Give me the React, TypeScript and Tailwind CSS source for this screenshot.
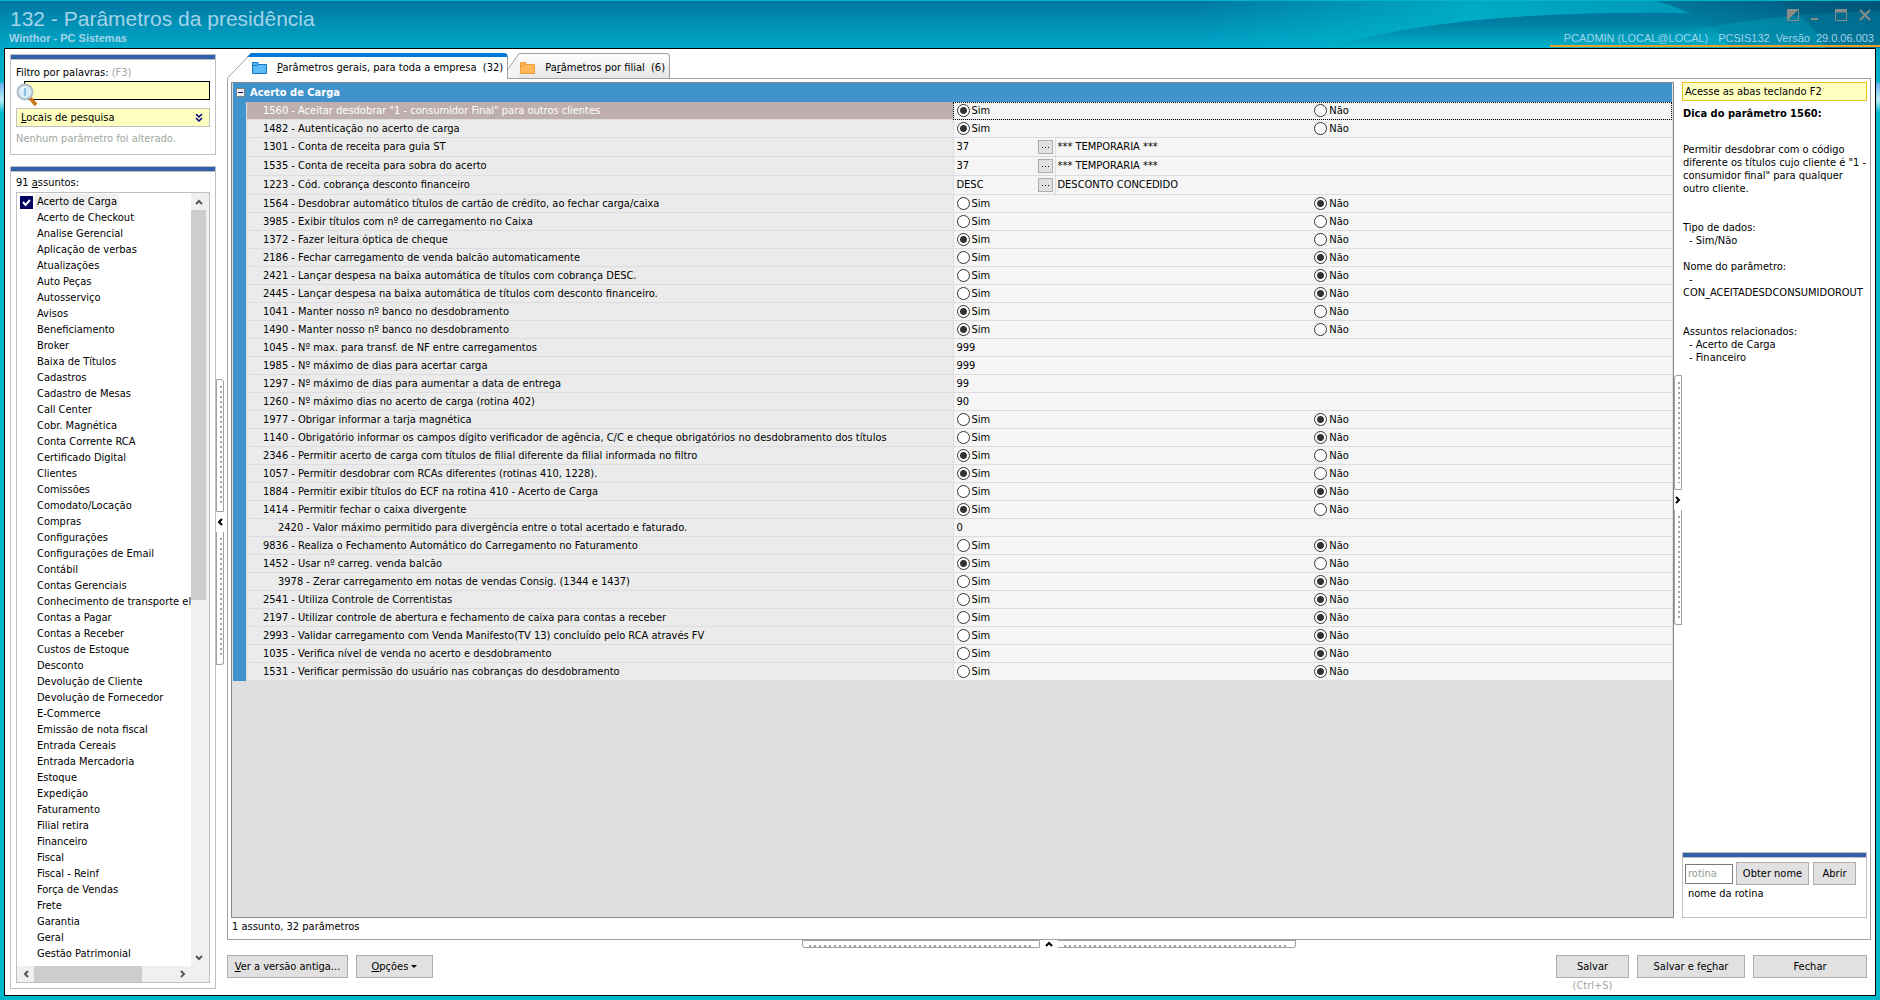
import React from 'react';

type Param = {
  code: string;
  name: string;
  sub?: boolean;
  yes?: boolean;
  value?: string;
  lookup?: string;
};

const subjects = [
  'Acerto de Carga', 'Acerto de Checkout', 'Analise Gerencial', 'Aplicação de verbas', 'Atualizações',
  'Auto Peças', 'Autosserviço', 'Avisos', 'Beneficiamento', 'Broker', 'Baixa de Títulos', 'Cadastros',
  'Cadastro de Mesas', 'Call Center', 'Cobr. Magnética', 'Conta Corrente RCA', 'Certificado Digital',
  'Clientes', 'Comissões', 'Comodato/Locação', 'Compras', 'Configurações', 'Configurações de Email',
  'Contábil', 'Contas Gerenciais', 'Conhecimento de transporte ele', 'Contas a Pagar',
  'Contas a Receber', 'Custos de Estoque', 'Desconto', 'Devolução de Cliente', 'Devolução de Fornecedor',
  'E-Commerce', 'Emissão de nota fiscal', 'Entrada Cereais', 'Entrada Mercadoria', 'Estoque', 'Expedição',
  'Faturamento', 'Filial retira', 'Financeiro', 'Fiscal', 'Fiscal - Reinf', 'Força de Vendas', 'Frete',
  'Garantia', 'Geral', 'Gestão Patrimonial',
];

const params: Param[] = [
  { code: '1560', name: 'Aceitar desdobrar "1 - consumidor Final" para outros clientes', yes: true },
  { code: '1482', name: 'Autenticação no acerto de carga', yes: true },
  { code: '1301', name: 'Conta de receita para guia ST', value: '37', lookup: '*** TEMPORARIA ***' },
  { code: '1535', name: 'Conta de receita para sobra do acerto', value: '37', lookup: '*** TEMPORARIA ***' },
  { code: '1223', name: 'Cód. cobrança desconto financeiro', value: 'DESC', lookup: 'DESCONTO CONCEDIDO' },
  { code: '1564', name: 'Desdobrar automático títulos de cartão de crédito, ao fechar carga/caixa', yes: false },
  { code: '3985', name: 'Exibir títulos com nº de carregamento no Caixa' },
  { code: '1372', name: 'Fazer leitura óptica de cheque', yes: true },
  { code: '2186', name: 'Fechar carregamento de venda balcão automaticamente', yes: false },
  { code: '2421', name: 'Lançar despesa na baixa automática de títulos com cobrança DESC.', yes: false },
  { code: '2445', name: 'Lançar despesa na baixa automática de títulos com desconto financeiro.', yes: false },
  { code: '1041', name: 'Manter nosso nº banco no desdobramento', yes: true },
  { code: '1490', name: 'Manter nosso nº banco no desdobramento', yes: true },
  { code: '1045', name: 'Nº max. para transf. de NF entre carregamentos', value: '999' },
  { code: '1985', name: 'Nº máximo de dias para acertar carga', value: '999' },
  { code: '1297', name: 'Nº máximo de dias para aumentar a data de entrega', value: '99' },
  { code: '1260', name: 'Nº máximo dias no acerto de carga (rotina 402)', value: '90' },
  { code: '1977', name: 'Obrigar informar a tarja magnética', yes: false },
  { code: '1140', name: 'Obrigatório informar os campos dígito verificador de agência, C/C e cheque obrigatórios no desdobramento dos títulos', yes: false },
  { code: '2346', name: 'Permitir acerto de carga com títulos de filial diferente da filial informada no filtro', yes: true },
  { code: '1057', name: 'Permitir desdobrar com RCAs diferentes (rotinas 410, 1228).', yes: true },
  { code: '1884', name: 'Permitir exibir títulos do ECF na rotina 410 - Acerto de Carga', yes: false },
  { code: '1414', name: 'Permitir fechar o caixa divergente', yes: true },
  { code: '2420', name: 'Valor máximo permitido para divergência entre o total acertado e faturado.', sub: true, value: '0' },
  { code: '9836', name: 'Realiza o Fechamento Automático do Carregamento no Faturamento', yes: false },
  { code: '1452', name: 'Usar nº carreg. venda balcão', yes: true },
  { code: '3978', name: 'Zerar carregamento em notas de vendas Consig. (1344 e 1437)', sub: true, yes: false },
  { code: '2541', name: 'Utiliza Controle de Correntistas', yes: false },
  { code: '2197', name: 'Utilizar controle de abertura e fechamento de caixa para contas a receber', yes: false },
  { code: '2993', name: 'Validar carregamento com Venda Manifesto(TV 13) concluído pelo RCA através FV', yes: false },
  { code: '1035', name: 'Verifica nível de venda no acerto e desdobramento', yes: false },
  { code: '1531', name: 'Verificar permissão do usuário nas cobranças do desdobramento', yes: false },
];

function Chevron({ dir }: { dir: 'up' | 'down' | 'left' | 'right' }) {
  const d = {
    up: 'M1 6 L4 3 L7 6',
    down: 'M1 2 L4 5 L7 2',
    left: 'M6 1 L3 4 L6 7',
    right: 'M2 1 L5 4 L2 7',
  }[dir];
  return (
    <svg width="8" height="8" viewBox="0 0 8 8" fill="none" stroke="currentColor" strokeWidth="2">
      <path d={d} />
    </svg>
  );
}

function Folder({ fill, stroke }: { fill: string; stroke: string }) {
  return (
    <svg width="15" height="12" viewBox="0 0 15 12" fill={fill} stroke={stroke} className="shrink-0">
      <path d="M.5 11.500V.5H6V2.500H14.500V11.500Z" />
      <path d="M.5 3.500H5L6 2.500" fill="none" />
    </svg>
  );
}

/* Collapsible splitter grip, vertical */
function Grip({ dir }: { dir: 'left' | 'right' }) {
  const dots = 'absolute inset-y-1.5 right-px w-0.5 bg-[repeating-linear-gradient(#a0a0a0_0_2px,transparent_2px_5px)]';
  const size = dir === 'left' ? 'h-[133px]' : 'h-[115px]';
  const top = dir === 'left' ? 'rounded-tr-[3px]' : 'rounded-tl-[3px]';
  const bottom = dir === 'left' ? 'rounded-br-[3px]' : 'rounded-bl-[3px]';
  return (
    <button aria-label="Recolher painel" className="flex w-2 shrink-0 flex-col items-center self-center">
      <span className={`relative block w-2 border border-[#a0a0a0] ${size} ${top}`}><span className={dots} /></span>
      <span className="flex h-5 items-center"><Chevron dir={dir} /></span>
      <span className={`relative block w-2 border border-t-0 border-[#a0a0a0] ${size} ${bottom}`}><span className={dots} /></span>
    </button>
  );
}

function Panel({ className, children }: { className?: string; children: React.ReactNode }) {
  return (
    <section className={`border border-[#c0c0c0] ${className ?? ''}`}>
      <div className="h-[5px] border-b border-[#c0c0c0] bg-[#315faa]" />
      {children}
    </section>
  );
}

function Button({ className, children }: { className?: string; children: React.ReactNode }) {
  return (
    <button className={`h-[23px] border border-[#adadad] bg-[#e1e1e1] text-center ${className ?? ''}`}>{children}</button>
  );
}

function Radio({ name, label, checked }: { name: string; label: string; checked: boolean }) {
  return (
    <label className="flex flex-1 items-center gap-0.5">
      <input
        type="radio"
        name={name}
        defaultChecked={checked}
        className="size-[13px] appearance-none rounded-full border border-[#333] bg-white checked:bg-[radial-gradient(circle,#333_3px,#fff_4px)]"
      />
      {label}
    </label>
  );
}

function TitleBar() {
  return (
    <header className="relative flex h-12 justify-between border-t border-[#00b4cc] bg-linear-to-b from-[#0078a3] to-[#00a9c8] font-['Liberation_Sans',Arial,sans-serif] text-[#a3d3ea]">
      <svg className="absolute right-0 top-0" width="680" height="47" viewBox="0 0 680 47">
        <defs>
          <linearGradient id="sheen" x1="0" y1="0" x2="1" y2="0">
            <stop offset="0" stopColor="#00bcd2" stopOpacity="0" />
            <stop offset=".4" stopColor="#00bcd2" stopOpacity=".7" />
            <stop offset="1" stopColor="#00bcd2" stopOpacity=".2" />
          </linearGradient>
          <linearGradient id="wedge" x1="0" y1="0" x2="0" y2="1">
            <stop offset=".2" stopColor="#007aa0" />
            <stop offset="1" stopColor="#00b2ca" />
          </linearGradient>
          <linearGradient id="corner" x1="0" y1="1" x2="1" y2="0">
            <stop offset="0" stopColor="#0098b8" />
            <stop offset="1" stopColor="#005278" />
          </linearGradient>
        </defs>
        <path d="M0 0H680V47H0Z" fill="url(#sheen)" />
        <path d="M125 47C210 22 320 10 480 12L680 22V47Z" fill="url(#wedge)" />
        <path d="M455 0C495 10 520 28 530 47H680V0Z" fill="url(#corner)" />
        <path d="M430 47C500 22 590 12 680 10V47Z" fill="#00a8c4" opacity=".35" />
        <path d="M575 0C605 14 620 32 625 47H680V0Z" fill="#005478" opacity=".35" />
      </svg>
      <div className="relative pl-[9px] pt-1">
        <h1 className="pl-px text-[21px] leading-[27px]">132 - Parâmetros da presidência</h1>
        <p className="text-[11px] leading-[12px] font-bold">Winthor - PC Sistemas</p>
      </div>
      <div className="relative flex flex-col items-end">
        <div className="flex h-7 items-center gap-3 pr-[9px] text-[#8c8c86]">
          <button aria-label="Tema">
            <svg width="12" height="12" viewBox="0 0 12 12"><path d="M.5 .5H11.500V11.500H.5Z" fill="none" stroke="currentColor" /><path d="M0 0H12L0 12Z" fill="currentColor" /></svg>
          </button>
          <button aria-label="Minimizar">
            <svg width="8" height="12" viewBox="0 0 8 12"><path d="M0 10H7" stroke="currentColor" strokeWidth="2" /></svg>
          </button>
          <button aria-label="Maximizar" className="pl-1">
            <svg width="12" height="12" viewBox="0 0 12 12"><path d="M.5 .5H11.500V11.500H.5Z" fill="none" stroke="currentColor" /><path d="M0 2H12" stroke="currentColor" strokeWidth="3" /></svg>
          </button>
          <button aria-label="Fechar janela">
            <svg width="12" height="12" viewBox="0 0 12 12"><path d="M1 1L11 11M11 1L1 11" stroke="currentColor" strokeWidth="2" /></svg>
          </button>
        </div>
        <p className="flex h-[18px] w-[330px] items-end justify-end gap-1.5 border-b-2 border-[#f0a020] pr-1.5 text-[11px] whitespace-nowrap">
          <span className="pr-1">PCADMIN (LOCAL@LOCAL)</span>
          <span>PCSIS132</span>
          <span>Versão</span>
          <span>29.0.06.003</span>
        </p>
      </div>
    </header>
  );
}

function Filter() {
  return (
    <Panel className="h-[101px]">
      <div className="flex flex-col px-[5px] pt-[5px]">
        <label htmlFor="filtro" className="leading-[16px]">
          Filtro por palavras: <span className="text-[#a0a8a0]">(F3)</span>
        </label>
        <div className="relative pl-2">
          <input id="filtro" className="block h-[19px] w-full border border-black bg-[#ffffc0] px-4" />
          <svg className="absolute left-0 top-0.5" width="23" height="24" viewBox="0 0 23 24" fill="none">
            <path d="M14 15L20 22" stroke="#c8791c" strokeWidth="3.500" />
            <circle cx="9" cy="9" r="7.500" fill="#d4ecf7" stroke="#b4bcc4" strokeWidth="2" />
            <path d="M9 5V13" stroke="#8fbfe0" strokeWidth="2" />
            <path d="M5 8C6 5 8 4 10 4" stroke="#fff" strokeWidth="1.500" />
          </svg>
        </div>
        <button className="mt-2 flex h-[19px] items-center justify-between border border-[#c0c0c0] bg-[#ffffc0] pl-1 pr-1.5">
          <span><u>L</u>ocais de pesquisa</span>
          <svg width="8" height="8" viewBox="0 0 8 8" fill="none" stroke="#000080" strokeWidth="1.500">
            <path d="M1 0L4 3L7 0M1 4L4 7L7 4" />
          </svg>
        </button>
        <p className="mt-1 leading-[16px] text-[#a0a8a0]">Nenhum parâmetro foi alterado.</p>
      </div>
    </Panel>
  );
}

function SubjectList() {
  return (
    <Panel className="flex flex-1 flex-col">
      <div className="flex flex-1 flex-col px-[5px] pt-0.5 pb-[5px]">
        <p className="h-[18px] leading-[17px]">91 <u>a</u>ssuntos:</p>
        <div className="flex flex-1 flex-col border border-[#c0c0c0]">
          <div className="flex flex-1">
            <ul className="w-0 flex-1 overflow-hidden pt-px pl-[3px]">
              {subjects.map((s, i) => (
                <li key={s} className="h-4">
                  <label className="flex h-4 items-center gap-0.5 whitespace-nowrap">
                    <span className="relative size-[13px] shrink-0">
                      <input type="checkbox" defaultChecked={i === 0} className="peer block size-[13px] appearance-none checked:bg-[#000060]" />
                      <svg className="absolute inset-0 hidden peer-checked:block" width="13" height="13" viewBox="0 0 13 13" fill="none" stroke="#fff" strokeWidth="2">
                        <path d="M3 6L5.500 9L10 4" />
                      </svg>
                    </span>
                    <span className={i === 0 ? 'bg-[#f0f0f0] px-0.5 leading-[16px]' : 'pl-0.5 leading-[16px]'}>{s}</span>
                  </label>
                </li>
              ))}
            </ul>
            <div className="flex w-[18px] shrink-0 flex-col items-center bg-[#f0f0f0] pr-[3px] text-[#505a5a]">
              <span className="flex h-[17px] items-center"><Chevron dir="up" /></span>
              <span className="h-[390px] w-full bg-[#cdcdcd]" />
              <span className="mt-auto flex h-[17px] items-center"><Chevron dir="down" /></span>
            </div>
          </div>
          <div className="flex h-4 items-center bg-[#f0f0f0] text-[#505a5a]">
            <span className="flex w-[17px] justify-center"><Chevron dir="left" /></span>
            <span className="mr-auto h-full w-[108px] bg-[#cdcdcd]" />
            <span className="mr-[18px] flex w-[17px] justify-center"><Chevron dir="right" /></span>
          </div>
        </div>
      </div>
    </Panel>
  );
}

function Tabs() {
  return (
    <div role="tablist" className="relative -mb-px flex h-[26px]">
      <svg width="24" height="26" viewBox="0 0 24 26" className="shrink-0">
        <path d="M.5 26V25L24 .5V26" fill="#fff" stroke="#a0a0a0" />
        <path d="M20 4L24 0V4Z" fill="#0078d7" />
        <path d="M1 26H24V5" stroke="#fff" strokeWidth="2" fill="none" />
      </svg>
      <button role="tab" aria-selected="true" className="flex items-center gap-2.5 rounded-tr-sm border-t-4 border-r border-t-[#0078d7] border-r-[#a0a0a0] bg-white pr-1 pl-px">
        <Folder fill="#5bbcf5" stroke="#0f78c8" />
        <span><u>P</u>arâmetros gerais, para toda a empresa&nbsp; (32)</span>
      </button>
      <svg width="11" height="25" viewBox="0 0 11 25" className="shrink-0">
        <path d="M0 16L11 .5V25H0Z" fill="#f3f3f3" />
        <path d="M0 16L11 .5" stroke="#a0a0a0" />
      </svg>
      <button role="tab" aria-selected="false" className="flex h-[25px] items-center gap-2.5 rounded-tr-sm border-t border-r border-[#a0a0a0] bg-linear-to-b from-white to-[#e6e6e6] pt-1 pr-1 pl-px">
        <Folder fill="#ffb95c" stroke="#f09a38" />
        <span>Pa<u>r</u>âmetros por filial&nbsp; (6)</span>
      </button>
    </div>
  );
}

function ParamTable() {
  return (
    <div className="flex-1 border border-[#828790] bg-[#dfdfdf] px-px">
      <table className="w-full table-fixed border-separate border-spacing-0 text-left">
        <colgroup>
          <col className="w-[13px]" />
          <col />
          <col className="w-1/2" />
        </colgroup>
        <thead>
          <tr className="h-[19px] bg-[#4193cd] text-white">
            <th colSpan={3} className="p-0">
              <span className="flex items-center gap-[5px] pl-[3px]">
                <button aria-label="Recolher Acerto de Carga" className="flex size-[9px] items-center justify-center border border-[#808080] bg-[#f0f0f0]">
                  <span className="h-px w-[5px] bg-[#000060]" />
                </button>
                Acerto de Carga
              </span>
            </th>
          </tr>
        </thead>
        <tbody>
          {params.map((p, i) => (
            <tr key={p.code} className={p.lookup ? 'h-[19px]' : 'h-[18px]'}>
              <td className="bg-[#4193cd] p-0" />
              <th
                scope="row"
                className={`border-b border-l border-[#dcdce2] p-0 font-normal whitespace-nowrap ${p.sub ? 'pl-[31px]' : 'pl-4'} ${i === 0 ? 'bg-[#beaead] text-white' : 'bg-[#ebebeb]'}`}
              >
                {p.code} - {p.name}
              </th>
              <td className={`border-b border-l border-[#dcdce2] bg-[#f5f5f5] p-0 ${i === 0 ? 'outline outline-dotted -outline-offset-1 outline-black' : ''}`}>
                {p.value === undefined ? (
                  <div className="flex pl-[3px]">
                    <Radio name={p.code} label="Sim" checked={p.yes === true} />
                    <Radio name={p.code} label="Não" checked={p.yes === false} />
                  </div>
                ) : p.lookup ? (
                  <div className="flex h-[18px] items-center pl-[3px]">
                    <span className="w-[81px]">{p.value}</span>
                    <button aria-label="Pesquisar" className="flex h-3.5 w-[15px] items-center justify-center border border-[#adadad] bg-[#e1e1e1]">
                      <svg width="7" height="1" viewBox="0 0 7 1"><path d="M0 0H1V1H0ZM3 0H4V1H3ZM6 0H7V1H6Z" /></svg>
                    </button>
                    <span className="ml-0.5 h-full border-l border-[#dcdce2] pl-0.5 leading-[18px]">{p.lookup}</span>
                  </div>
                ) : (
                  <span className="pl-[3px]">{p.value}</span>
                )}
              </td>
            </tr>
          ))}
        </tbody>
      </table>
    </div>
  );
}

function Hint() {
  return (
    <aside className="flex w-[185px] shrink-0 flex-col">
      <p className="h-[19px] border border-[#e8c41c] bg-[#ffffc0] pl-0.5 leading-[18px]">Acesse as abas teclando F2</p>
      <div className="pt-1.5 pl-px leading-[13px]">
        <h2 className="mb-[23px] font-bold">Dica do parâmetro 1560:</h2>
        <p>Permitir desdobrar com o código<br />diferente os títulos cujo cliente é "1 - consumidor final" para qualquer outro cliente.</p>
        <p className="mt-[26px]">Tipo de dados:</p>
        <p className="pl-1.5">- Sim/Não</p>
        <p className="mt-[13px]">Nome do parâmetro:</p>
        <p className="pl-1.5">-</p>
        <p>CON_ACEITADESDCONSUMIDOROUT</p>
        <p className="mt-[26px]">Assuntos relacionados:</p>
        <p className="pl-1.5">- Acerto de Carga</p>
        <p className="pl-1.5">- Financeiro</p>
      </div>
      <Panel className="mt-auto h-[66px]">
        <div className="flex items-center gap-[3px] px-0.5 pt-1">
          <input aria-label="rotina" placeholder="rotina" className="h-5 w-12 border border-[#7a7a7a] bg-white pl-0.5 placeholder:text-[#90a090]" />
          <Button className="w-[73px]">Obter nome</Button>
          <Button className="ml-px w-[43px]">Abrir</Button>
        </div>
        <p className="pl-[5px] leading-[18px]">nome da rotina</p>
      </Panel>
    </aside>
  );
}

function Footer() {
  return (
    <footer className="flex gap-2 pb-px">
      <Button className="w-[121px]"><u>V</u>er a versão antiga...</Button>
      <Button className="w-[77px]">
        <u>O</u>pções <span className="inline-block border-x-[3px] border-t-[3px] border-x-transparent border-t-black align-middle" />
      </Button>
      <div className="ml-auto flex flex-col items-center">
        <Button className="w-[73px]">Salvar</Button>
        <span className="leading-[16px] text-[#a0a8a0]">(Ctrl+S)</span>
      </div>
      <Button className="w-[108px]">Salvar e fe<u>c</u>har</Button>
      <Button className="mr-1 w-[114px]">Fechar</Button>
    </footer>
  );
}

export default function App() {
  const dots = 'absolute inset-x-1.5 top-1 h-0.5 bg-[repeating-linear-gradient(90deg,#a0a0a0_0_2px,transparent_2px_5px)]';
  return (
    <div className="flex min-h-screen flex-col bg-[linear-gradient(#00a5c5_48px,#00b4cc_82px,#68b4ec_84px,#b8ecf4_100px,#00b8cc_113px)] pb-1 font-['DejaVu_Sans_Condensed','DejaVu_Sans',Tahoma,sans-serif] text-[11px] leading-[14px] text-black">
      <TitleBar />
      <main className="mx-1 flex flex-1 border border-black bg-white pr-1 pl-[5px]">
        <div className="flex w-[206px] shrink-0 flex-col gap-[11px] pt-[5px] pb-1.5">
          <Filter />
          <SubjectList />
        </div>
        <Grip dir="left" />
        <div className="ml-[3px] flex flex-1 flex-col pt-1">
          <Tabs />
          <div className="flex flex-1 flex-col border border-[#a0a0a0] px-[3px] pt-[3px]">
            <div className="flex flex-1">
              <ParamTable />
              <Grip dir="right" />
              <Hint />
            </div>
            <p className="h-[21px] pl-px leading-[18px]">1 assunto, 32 parâmetros</p>
          </div>
          <button aria-label="Recolher rodapé" className="mb-[7px] flex h-2 items-center justify-center">
            <span className="relative block h-2 w-[238px] rounded-bl-[3px] border border-[#a0a0a0]"><span className={dots} /></span>
            <span className="flex w-[18px] justify-center"><Chevron dir="up" /></span>
            <span className="relative block h-2 w-[238px] rounded-br-[3px] border border-l-0 border-[#a0a0a0]"><span className={dots} /></span>
          </button>
          <Footer />
        </div>
      </main>
    </div>
  );
}
